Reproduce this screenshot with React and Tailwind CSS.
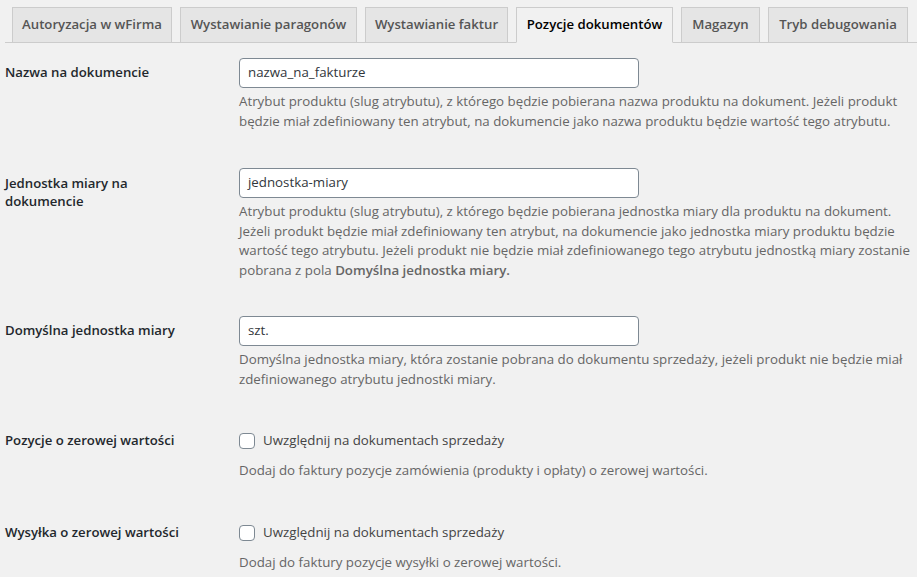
const F = { fontFamily: '"Open Sans", "Noto Sans", sans-serif' };

function Tab({ label, width, active }) {
  return (
    <div
      className={
        "-mb-px h-[36px] flex items-center justify-center border text-[13.2px] font-semibold whitespace-nowrap " +
        (active
          ? "bg-[#f1f1f1] border-[#ccc] border-b-[#f1f1f1] text-black"
          : "bg-[#e5e5e5] border-[#ccc] text-[#555]")
      }
      style={{ width }}
    >
      {label}
    </div>
  );
}

function Label({ children, pt = "pt-[5px]" }) {
  return (
    <div className={"w-[234px] shrink-0 pr-[40px] text-[13.2px] font-semibold leading-[18px] text-[#23282d] " + pt}>
      {children}
    </div>
  );
}

function Desc({ lines }) {
  return (
    <div className="mt-[4px] text-[13.3px] leading-[19.5px] text-[#666]">
      {lines.map((l, i) => (
        <div key={i} className="whitespace-nowrap">
          {l}
        </div>
      ))}
    </div>
  );
}

function TextInput({ value }) {
  return (
    <div className="w-[400px] h-[30px] border border-[#7e8993] rounded-[4px] bg-white px-[8px] flex items-center text-[13.3px] text-[#32373c]">
      {value}
    </div>
  );
}

function Check({ label }) {
  return (
    <div className="h-[32px] flex items-center">
      <span className="w-[16px] h-[16px] border border-[#7e8993] rounded-[4px] bg-white shrink-0" />
      <span className="ml-[8px] text-[13.3px] text-[#444]">{label}</span>
    </div>
  );
}

export default function App() {
  const tabs = [
    ["Autoryzacja w wFirma", 160],
    ["Wystawianie paragonów", 177],
    ["Wystawianie faktur", 143],
    ["Pozycje dokumentów", 157, true],
    ["Magazyn", 79],
    ["Tryb debugowania", 140],
  ];
  return (
    <div className="min-h-screen bg-[#f1f1f1]" style={F}>
      <div className="pt-[7px] ml-[5px] pl-[7px] flex gap-[8px] border-b border-[#ccc]">
        {tabs.map(([l, w, a]) => (
          <Tab key={l} label={l} width={w} active={a} />
        ))}
      </div>

      <div className="pl-[5px]">
        <div className="flex mt-[15px]">
          <Label>Nazwa na dokumencie</Label>
          <div>
            <TextInput value="nazwa_na_fakturze" />
            <Desc
              lines={[
                "Atrybut produktu (slug atrybutu), z którego będzie pobierana nazwa produktu na dokument. Jeżeli produkt",
                "będzie miał zdefiniowany ten atrybut, na dokumencie jako nazwa produktu będzie wartość tego atrybutu.",
              ]}
            />
          </div>
        </div>

        <div className="flex mt-[37px]">
          <Label pt="pt-[6px]">Jednostka miary na dokumencie</Label>
          <div>
            <TextInput value="jednostka-miary" />
            <Desc
              lines={[
                "Atrybut produktu (slug atrybutu), z którego będzie pobierana jednostka miary dla produktu na dokument.",
                "Jeżeli produkt będzie miał zdefiniowany ten atrybut, na dokumencie jako jednostka miary produktu będzie",
                "wartość tego atrybutu. Jeżeli produkt nie będzie miał zdefiniowanego tego atrybutu jednostką miary zostanie",
                <>
                  pobrana z pola <b className="font-semibold">Domyślna jednostka miary.</b>
                </>,
              ]}
            />
          </div>
        </div>

        <div className="flex mt-[36px]">
          <Label>Domyślna jednostka miary</Label>
          <div>
            <TextInput value="szt." />
            <Desc
              lines={[
                "Domyślna jednostka miary, która zostanie pobrana do dokumentu sprzedaży, jeżeli produkt nie będzie miał",
                "zdefiniowanego atrybutu jednostki miary.",
              ]}
            />
          </div>
        </div>

        <div className="flex mt-[36px]">
          <Label pt="pt-[6px]">Pozycje o zerowej wartości</Label>
          <div>
            <Check label="Uwzględnij na dokumentach sprzedaży" />
            <Desc lines={["Dodaj do faktury pozycje zamówienia (produkty i opłaty) o zerowej wartości."]} />
          </div>
        </div>

        <div className="flex mt-[36px]">
          <Label pt="pt-[6px]">Wysyłka o zerowej wartości</Label>
          <div>
            <Check label="Uwzględnij na dokumentach sprzedaży" />
            <Desc lines={["Dodaj do faktury pozycje wysyłki o zerowej wartości."]} />
          </div>
        </div>
      </div>
    </div>
  );
}
